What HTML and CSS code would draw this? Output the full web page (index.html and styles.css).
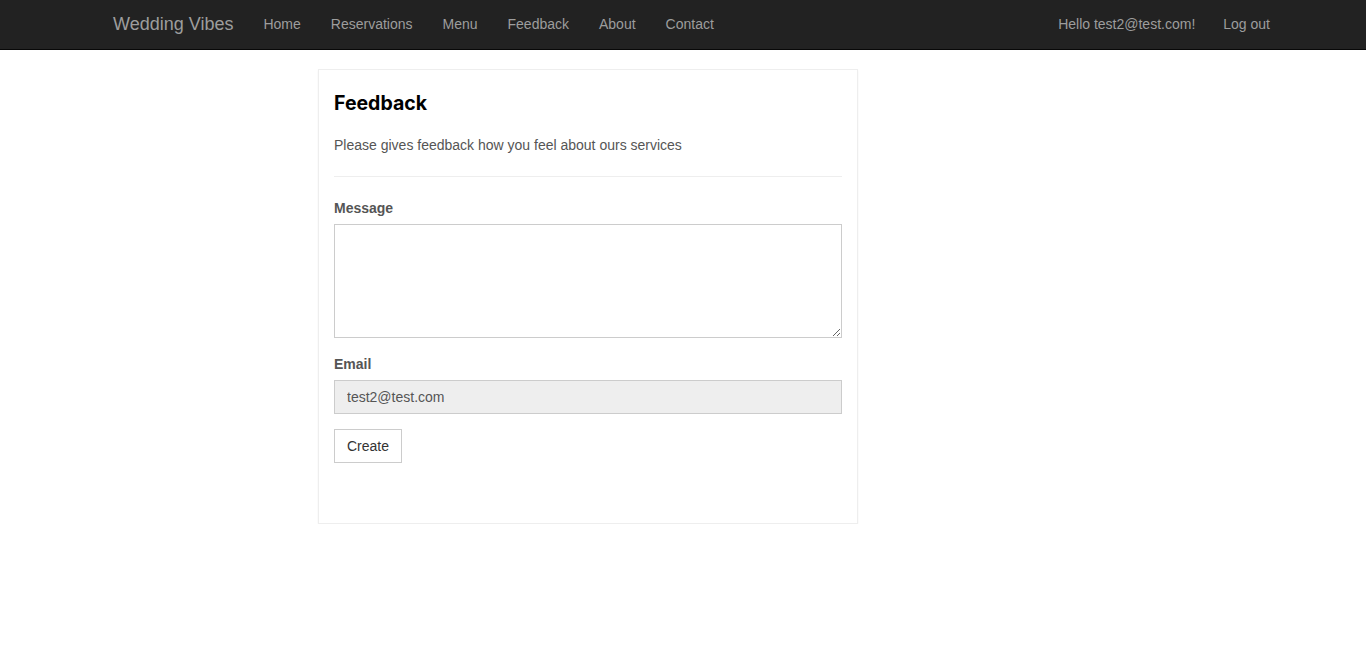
FILE: index.html
```html
<!DOCTYPE html>
<html lang="en">
<head>
<meta charset="utf-8">
<title>Feedback - Wedding Vibes</title>
<link rel="stylesheet" href="styles.css">
</head>
<body>
<nav class="navbar">
  <div class="nav-left">
    <a class="brand" href="#">Wedding Vibes</a>
    <a class="nav-link" href="#">Home</a>
    <a class="nav-link" href="#">Reservations</a>
    <a class="nav-link" href="#">Menu</a>
    <a class="nav-link" href="#">Feedback</a>
    <a class="nav-link" href="#">About</a>
    <a class="nav-link" href="#">Contact</a>
  </div>
  <div class="nav-right">
    <a class="nav-link nav-hello" href="#">Hello test2@test.com!</a>
    <a class="nav-link" href="#">Log out</a>
  </div>
</nav>
<main class="main">
  <section class="card">
    <h2 class="card-title">Feedback</h2>
    <p class="card-intro">Please gives feedback how you feel about ours services</p>
    <hr class="divider">
    <form class="form">
      <label class="label label-first" for="msg">Message</label>
      <textarea id="msg" class="textarea"></textarea>
      <label class="label" for="email">Email</label>
      <input id="email" class="input" type="text" value="test2@test.com" readonly>
      <button type="button" class="btn">Create</button>
    </form>
  </section>
</main>
</body>
</html>
```

FILE: styles.css
```css
* { box-sizing: border-box; }
html, body { margin: 0; padding: 0; }
body {
  font-family: "Liberation Sans", Arial, sans-serif;
  font-size: 14px;
  line-height: 20px;
  color: #333;
  background: #fff;
}
.navbar {
  height: 50px;
  background: #222;
  border-bottom: 1px solid #080808;
  display: flex;
  justify-content: space-between;
  align-items: stretch;
  padding: 0 81px 0 98px;
}
.nav-left, .nav-right { display: flex; align-items: stretch; }
.brand {
  font-size: 18px;
  line-height: 20px;
  padding: 14px 15px 15px 15px;
  color: #9d9d9d;
  text-decoration: none;
}
.nav-link {
  padding: 14px 15px 15px;
  color: #9d9d9d;
  text-decoration: none;
}
.nav-hello { padding-right: 13px; }
.main {
  padding: 19px 0 0 318px;
}
.card {
  width: 540px;
  border: 1px solid #eee;
  box-shadow: 0 1px 2px rgba(0,0,0,0.05);
  padding: 15px 15px 60px;
  background: #fff;
}
.card-title {
  margin: 7px 0 0;
  font-family: Inter, "Open Sans", sans-serif;
  font-weight: 700;
  font-size: 19.5px;
  line-height: 23px;
  color: #000;
}
.card-intro {
  margin: 20px 0 0;
  color: #555;
}
.divider {
  margin: 21px 0 0;
  border: 0;
  border-top: 1px solid #eee;
  height: 0;
}
.form { display: flex; flex-direction: column; align-items: flex-start; }
.label {
  font-weight: 700;
  color: #555;
  margin-top: 16px;
  margin-bottom: 6px;
}
.label-first { margin-top: 21px; }
.textarea {
  width: 100%;
  height: 114px;
  border: 1px solid #ccc;
  border-radius: 0;
  padding: 6px 12px;
  font: inherit;
  resize: vertical;
  margin: 0;
}
.input {
  width: 100%;
  height: 34px;
  border: 1px solid #ccc;
  background: #eee;
  padding: 6px 12px;
  font: inherit;
  color: #555;
  margin: 0;
  border-radius: 0;
}
.btn {
  margin-top: 15px;
  height: 34px;
  padding: 6px 12px;
  border: 1px solid #ccc;
  background: #fff;
  color: #333;
  font: inherit;
  border-radius: 0;
}
```
